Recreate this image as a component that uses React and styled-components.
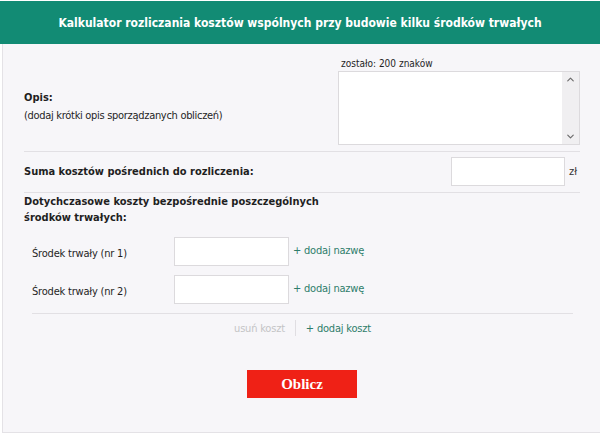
import styled, { createGlobalStyle } from "styled-components";
import { ChevronUp, ChevronDown } from "lucide-react";

const GlobalStyle = createGlobalStyle`
  body {
    margin: 0;
    background: #ffffff;
    font-family: "DejaVu Sans Condensed", "DejaVu Sans", sans-serif;
    color: #1f1f1f;
  }
`;

const Page = styled.div`
  width: 600px;
  height: 436px;
  padding-top: 1px;
  box-sizing: border-box;
`;

const Header = styled.div`
  height: 43px;
  background: #128b74;
  color: #ffffff;
  display: flex;
  align-items: center;
  justify-content: center;
  font-size: 12px;
  font-weight: bold;
`;

const Body = styled.div`
  margin-left: 2px;
  height: 389px;
  background: #f7f6f9;
  border-left: 1px solid #e4e2e6;
  border-bottom: 1px solid #e4e2e6;
  padding: 0 20px 0 21px;
  box-sizing: border-box;
`;

const Section = styled.div`
  display: flex;
  align-items: ${(p) => p.$align || "center"};
  justify-content: space-between;
  padding: ${(p) => p.$pad || "0"};
  border-bottom: ${(p) => (p.$line ? "1px solid #e2e0e4" : "none")};
`;

const LabelBlock = styled.div`
  font-size: 11px;
  line-height: 19px;
  letter-spacing: -0.3px;
  padding-top: ${(p) => p.$top || "0"};
`;

const Bold = styled.div`
  font-weight: bold;
  font-size: 11px;
  line-height: 16px;
  letter-spacing: 0;
  max-width: ${(p) => p.$max || "none"};
`;

const Counter = styled.div`
  font-size: 10px;
  line-height: 11px;
  margin: 0 0 2px 3px;
`;

const TextAreaBox = styled.div`
  display: flex;
  width: 242px;
  height: 74px;
  box-sizing: border-box;
  border: 1px solid #dcdadd;
  background: #fff;
`;

const TextArea = styled.textarea`
  flex: 1;
  border: none;
  background: transparent;
  resize: none;
  outline: none;
  margin: 0;
  padding: 2px;
`;

const ScrollTrack = styled.div`
  width: 17px;
  background: #f0eff1;
  display: flex;
  flex-direction: column;
  justify-content: space-between;
  align-items: center;
  padding: 2px 0;
  color: #6a6a6a;
`;

const Input = styled.input`
  width: ${(p) => p.$w || "115px"};
  height: 29px;
  box-sizing: border-box;
  border: 1px solid #dcdadd;
  background: #fff;
  margin: 0;
  padding: 0 4px;
`;

const Unit = styled.span`
  font-size: 11px;
  margin: 0 3px 0 4px;
  color: #333;
`;

const Group = styled.div`
  display: flex;
  align-items: center;
`;

const Items = styled.div`
  padding: 0 7px 0 8px;
`;

const ItemRow = styled.div`
  display: flex;
  align-items: center;
  margin-bottom: 9px;
`;

const ItemLabel = styled.div`
  width: 142px;
  font-size: 11px;
  letter-spacing: -0.2px;
  padding-top: 4px;
`;

const AddLink = styled.a`
  font-size: 11px;
  letter-spacing: -0.2px;
  color: #2e7d6b;
  margin-left: 4px;
  margin-top: -3px;
  cursor: pointer;
`;

const Actions = styled.div`
  border-top: 1px solid #e2e0e4;
  display: flex;
  justify-content: center;
  align-items: center;
  padding-top: 6px;
  font-size: 11px;
  letter-spacing: -0.2px;
`;

const Muted = styled.span`
  color: #c4c4c6;
`;

const Divider = styled.span`
  width: 1px;
  height: 16px;
  background: #e0dee2;
  margin: 0 10px;
`;

const ActionLink = styled.span`
  color: #2e7d6b;
`;

const ButtonRow = styled.div`
  display: flex;
  justify-content: center;
  padding-top: 34px;
`;

const Button = styled.button`
  width: 110px;
  height: 28px;
  border: none;
  background: #ef2116;
  color: #fff;
  font-family: "Liberation Serif", serif;
  font-weight: bold;
  font-size: 15px;
`;

export default function App() {
  return (
    <Page>
      <GlobalStyle />
      <Header>Kalkulator rozliczania kosztów wspólnych przy budowie kilku środków trwałych</Header>
      <Body>
        <Section $line $pad="14px 0 6px 0">
          <LabelBlock $top="12px">
            <Bold>Opis:</Bold>
            (dodaj krótki opis sporządzanych obliczeń)
          </LabelBlock>
          <div>
            <Counter>zostało: 200 znaków</Counter>
            <TextAreaBox>
              <TextArea />
              <ScrollTrack>
                <ChevronUp size={11} strokeWidth={2.5} />
                <ChevronDown size={11} strokeWidth={2.5} />
              </ScrollTrack>
            </TextAreaBox>
          </div>
        </Section>
        <Section $line $pad="5px 0 6px 0">
          <Bold>Suma kosztów pośrednich do rozliczenia:</Bold>
          <Group>
            <Input $w="114px" />
            <Unit>zł</Unit>
          </Group>
        </Section>
        <Section $align="flex-start" $pad="1px 0 11px 0">
          <Bold $max="310px">Dotychczasowe koszty bezpośrednie poszczególnych środków trwałych:</Bold>
        </Section>
        <Items>
          <ItemRow>
            <ItemLabel>Środek trwały (nr 1)</ItemLabel>
            <Input />
            <AddLink>+ dodaj nazwę</AddLink>
          </ItemRow>
          <ItemRow>
            <ItemLabel>Środek trwały (nr 2)</ItemLabel>
            <Input />
            <AddLink>+ dodaj nazwę</AddLink>
          </ItemRow>
          <Actions>
            <Muted>usuń koszt</Muted>
            <Divider />
            <ActionLink>+ dodaj koszt</ActionLink>
          </Actions>
        </Items>
        <ButtonRow>
          <Button>Oblicz</Button>
        </ButtonRow>
      </Body>
    </Page>
  );
}
